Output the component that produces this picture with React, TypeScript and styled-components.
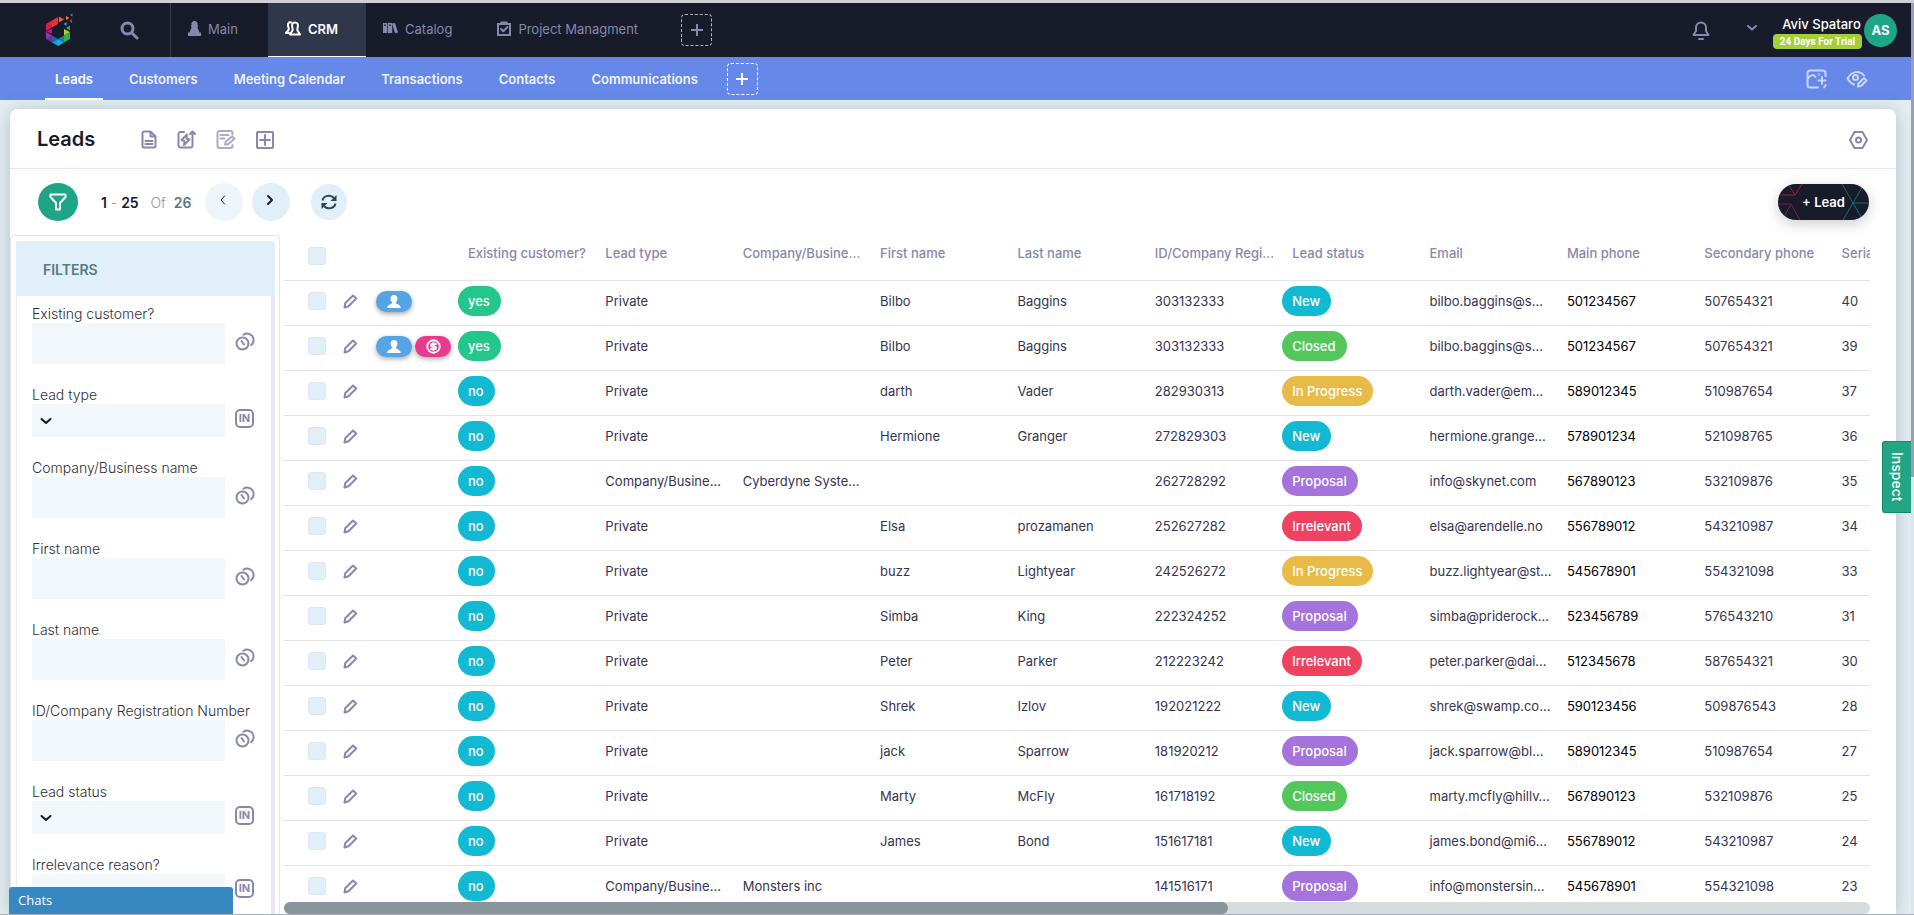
import React from "react";
import styled, { createGlobalStyle } from "styled-components";
import { CircleDollarSign } from "lucide-react";

const Global = createGlobalStyle`
  * { box-sizing: border-box; }
  body { margin: 0; font-family: Inter, "Liberation Sans", sans-serif; font-size: 13px; color: #37344f; }
  button, input, select { font: inherit; margin: 0; }
  button { border: 0; padding: 0; background: none; cursor: pointer; color: inherit; }
  a { color: inherit; text-decoration: none; }
  svg { display: block; flex: none; }
`;

const Page = styled.div`
  height: 100vh;
  display: flex;
  flex-direction: column;
  overflow: hidden;
  border-top: 3px solid #cfd0d6;
  border-bottom: 1px solid #aab0b8;
  background: #e4eff2;
`;
const Frame = styled.div`
  flex: 1;
  min-height: 0;
  display: flex;
`;
const Main = styled.div`
  flex: 1;
  min-width: 0;
  display: flex;
  flex-direction: column;
`;
const PageScroll = styled.div`
  width: 3px;
  background: #dbe6ec;
  &::before { content: ""; display: block; height: 52%; background: #9d9bbb; }
`;

const TopBar = styled.header`
  height: 54px;
  flex: none;
  display: flex;
  align-items: center;
  background: #171b2a;
  color: #8987ad;
  padding-right: 14px;
`;
const Brand = styled.div`
  width: 171px;
  height: 100%;
  display: flex;
  align-items: center;
  gap: 47px;
  padding-left: 45px;
  border-right: 1px solid #343848;
`;
const Tabs = styled.nav`
  display: flex;
  align-self: stretch;
  align-items: center;
`;
const Tab = styled.a<{ $active?: boolean }>`
  display: flex;
  align-items: center;
  gap: 7px;
  height: 100%;
  min-width: 97px;
  padding: 0 28px 2px 17px;
  white-space: nowrap;
  color: ${(p) => (p.$active ? "#fff" : "#8987ad")};
  font-weight: ${(p) => (p.$active ? 600 : 400)};
  background: ${(p) => (p.$active ? "#30374b" : "transparent")};
  border-bottom: 1px solid ${(p) => (p.$active ? "#fff" : "transparent")};
`;
const AddTab = styled.button<{ $light?: boolean }>`
  width: 31px;
  height: 32px;
  display: grid;
  place-items: center;
  margin-left: ${(p) => (p.$light ? 19 : 15)}px;
  border: 1px dashed ${(p) => (p.$light ? "#fff" : "#b4b4b4")};
  border-radius: 4px;
  color: ${(p) => (p.$light ? "#fff" : "#8987ad")};
`;
const Spacer = styled.div`flex: 1;`;
const User = styled.div`
  display: flex;
  align-items: center;
  gap: 2px;
  margin-left: 16px;
`;
const UserText = styled.div`
  display: flex;
  flex-direction: column;
  align-items: center;
  gap: 1px;
  padding-top: 4px;
`;
const UserName = styled.div`
  color: #fff;
  font-weight: 500;
  line-height: 18px;
  padding-left: 8px;
`;
const Trial = styled.div`
  height: 15px;
  width: 89px;
  text-align: center;
  border-radius: 4px;
  background: #a6ce39;
  color: #fff;
  font-family: Roboto, "Liberation Sans", sans-serif;
  font-size: 10px;
  font-weight: 700;
  line-height: 15px;
  white-space: nowrap;
`;
const Avatar = styled.button`
  width: 33px;
  height: 33px;
  border-radius: 50%;
  background: #1ea585;
  color: #fff;
  font-weight: 700;
`;

const SubBar = styled.nav`
  height: 43px;
  flex: none;
  display: flex;
  align-items: center;
  padding: 0 43px 0 45px;
  background: #6689e9;
  color: #c9d5f9;
`;
const SubLinks = styled.div`
  display: flex;
  align-self: stretch;
  gap: 16px;
`;
const SubLink = styled.a<{ $active?: boolean }>`
  display: flex;
  align-items: center;
  padding: 2px 10px 0;
  color: ${(p) => (p.$active ? "#fff" : "#eef2fd")};
  font-weight: 600;
  white-space: nowrap;
  border-bottom: 2px solid ${(p) => (p.$active ? "#fff" : "transparent")};
`;
const Tools = styled.div<{ $gap: number }>`
  display: flex;
  align-items: center;
  gap: ${(p) => p.$gap}px;
`;

const Card = styled.section`
  flex: 1;
  min-height: 0;
  display: flex;
  flex-direction: column;
  margin: 9px 15px 0 10px;
  background: #fff;
  border-radius: 8px 8px 0 0;
  box-shadow: 0 2px 18px rgba(90, 110, 125, 0.38);
`;
const TitleRow = styled.div`
  display: flex;
  align-items: center;
  height: 60px;
  flex: none;
  padding: 2px 28px 0 27px;
  border-bottom: 1px solid #e7e6f4;
  color: #8987ad;
`;
const Title = styled.h1`
  margin: 0 46px 2px 0;
  font-size: 20px;
  font-weight: 600;
  color: #171b2a;
`;
const ActionRow = styled.div`
  display: flex;
  align-items: center;
  height: 66px;
  flex: none;
  padding: 0 27px 0 28px;
`;
const Round = styled.button<{ $bg: string; $w: number }>`
  width: ${(p) => p.$w}px;
  height: ${(p) => Math.min(p.$w, 38)}px;
  border-radius: 50%;
  display: grid;
  place-items: center;
  background: ${(p) => p.$bg};
`;
const PageButton = styled(Round)`
  padding: 0 2px 4px 0;
  color: #171b2a;
`;
const RefreshButton = styled(Round)`
  margin-left: 21px;
  color: #2f4750;
`;
const Range = styled.div`
  display: flex;
  width: 127px;
  padding-left: 23px;
  font-size: 14px;
  font-weight: 600;
  color: #171b2a;
  white-space: pre;
`;
const Soft = styled.span<{ $bold?: boolean }>`
  color: ${(p) => (p.$bold ? "#587a80" : "#8a97a3")};
  font-weight: ${(p) => (p.$bold ? 600 : 300)};
`;
const LeadButton = styled.button`
  position: relative;
  width: 91px;
  height: 36px;
  overflow: hidden;
  border-radius: 18px;
  background: #171b2a;
  color: #fff;
  font-weight: 600;
  box-shadow: 0 4px 14px rgba(30, 30, 40, 0.22);
  & svg { position: absolute; inset: 0; }
  & span { position: relative; }
`;

const Body = styled.div`
  flex: 1;
  min-height: 0;
  display: flex;
  padding-right: 26px;
`;
const Filters = styled.aside`
  width: 270px;
  flex: none;
  display: flex;
  flex-direction: column;
  margin-right: 4px;
  padding: 5px 4px 0 5px;
  border: 1px solid #e4e3ee;
  border-bottom: 0;
  border-radius: 4px 4px 0 0;
`;
const FiltersHead = styled.h2`
  margin: 0;
  height: 55px;
  flex: none;
  padding: 0 27px;
  line-height: 57px;
  border-radius: 3px 3px 0 0;
  background: #e1eff8;
  color: #587a80;
  font-size: 14px;
  font-weight: 600;
`;
const FilterList = styled.div`
  flex: 1;
  min-height: 0;
  overflow: hidden;
  padding: 9px 0 0 15px;
  border-left: 1px solid #ecebf5;
  border-right: 4px solid #e8e7f3;
`;
const Field = styled.div`margin-bottom: 22px;`;
const Label = styled.label`
  display: block;
  line-height: 18px;
  font-size: 14px;
  font-weight: 300;
  color: #2f2f38;
  white-space: nowrap;
`;
const FieldRow = styled.div`
  display: flex;
  align-items: center;
  gap: 10px;
  color: #8987ad;
  & > button { margin-bottom: 4px; }
`;
const TextBox = styled.input`
  width: 193px;
  height: 41px;
  border: 0;
  background: #f2f7fb;
`;
const SelectWrap = styled.div`
  position: relative;
  & svg { position: absolute; left: 8px; top: 13px; color: #171b2a; pointer-events: none; }
`;
const SelectBox = styled.select`
  display: block;
  width: 193px;
  height: 33px;
  appearance: none;
  border: 0;
  border-radius: 0;
  background: #f2f7fb;
`;
const InButton = styled.button`
  width: 19px;
  height: 19px;
  border: 2px solid #8987ad;
  border-radius: 5px;
  font-size: 11px;
  line-height: 15px;
  font-weight: 700;
`;

const Grid = styled.div`
  flex: 1;
  min-width: 0;
  display: flex;
  flex-direction: column;
`;
const Scroller = styled.div`
  flex: 1;
  min-height: 0;
  overflow: hidden;
`;
const ScrollTrack = styled.div`
  height: 12px;
  flex: none;
  border-radius: 6px;
  background: #d6dcdd;
  &::before { content: ""; display: block; width: 59.5%; height: 12px; border-radius: 6px; background: #88959a; }
`;
const Table = styled.table`
  width: 1685px;
  table-layout: fixed;
  border-collapse: separate;
  border-spacing: 0;
`;
const Col = styled.col<{ $w?: number }>`width: ${(p) => (p.$w ? p.$w + "px" : "auto")};`;
const Th = styled.th`
  height: 46px;
  padding: 0 0 9px 10px;
  text-align: left;
  font-weight: 500;
  color: #8987ad;
  white-space: nowrap;
  overflow: hidden;
  text-overflow: ellipsis;
  border-bottom: 1px solid #e3e3ec;
`;
const Td = styled.td<{ $flush?: boolean; $dark?: boolean }>`
  height: 45px;
  padding: 0 0 4px ${(p) => (p.$flush ? 0 : 10)}px;
  white-space: nowrap;
  overflow: hidden;
  text-overflow: ellipsis;
  color: ${(p) => (p.$dark ? "#000" : "#37344f")};
  border-bottom: 1px solid #e3e3ec;
`;
const CheckTh = styled(Th)`padding: 0 0 4px 24px;`;
const CheckTd = styled(Td)`padding: 0 0 4px 24px;`;
const BadgeTd = styled(Td)`padding: 0 0 4px; overflow: visible;`;
const Check = styled.input`
  display: block;
  appearance: none;
  width: 18px;
  height: 18px;
  border: 1px solid #e4e4f3;
  border-radius: 3px;
  background: #e1eff9;
`;
const EditButton = styled.button`display: block; color: #8987ad;`;
const Pill = styled.span<{ $bg: string }>`
  display: block;
  width: fit-content;
  height: 30px;
  padding: 0 11px 0 10px;
  border-radius: 15px;
  line-height: 30px;
  color: #fff;
  font-weight: 500;
  background: ${(p) => p.$bg};
`;
const Badges = styled.div`display: flex; gap: 3px;`;
const Badge = styled.button<{ $bg: string }>`
  width: 36px;
  height: 21px;
  flex: none;
  border-radius: 11px;
  display: grid;
  place-items: center;
  color: #fff;
  background: ${(p) => p.$bg};
  box-shadow: 0 2px 5px rgba(0, 0, 0, 0.35);
`;

const Chats = styled.button`
  position: fixed;
  left: 9px;
  bottom: 1px;
  width: 224px;
  height: 27px;
  padding: 0 9px 2px;
  text-align: left;
  border-radius: 3px 3px 0 0;
  background: #3787c0;
  color: #fff;
  font-family: "Open Sans", sans-serif;
`;
const Inspect = styled.button`
  position: fixed;
  right: 3px;
  top: 441px;
  width: 29px;
  height: 72px;
  writing-mode: vertical-rl;
  border: 1px solid #0e8c6a;
  border-right: 0;
  border-radius: 3px 0 0 3px;
  background: #22a585;
  color: #fff;
  font-size: 14px;
  font-weight: 500;
`;

type IconProps = { w: number; h?: number; box?: string; sw?: number; children: React.ReactNode };
const Icon = ({ w, h = w, box = `0 0 ${w} ${h}`, sw = 2, children }: IconProps) => (
  <svg width={w} height={h} viewBox={box} fill="none" stroke="currentColor" strokeWidth={sw} strokeLinecap="round" strokeLinejoin="round" aria-hidden="true">
    {children}
  </svg>
);

const Logo = () => (
  <svg width="28" height="34" viewBox="0 0 28 34" aria-label="Logo">
    <path d="M1 11 7 7.500V14.500z" fill="#d92a3a" />
    <path d="M7 7.500 13 4V11L7 14.500z" fill="#ee2f3a" />
    <path d="M1 11V18L7 14.500z" fill="#e0185f" />
    <path d="M14 3.500 19 6.500 14 9.500z" fill="#f0632b" />
    <path d="M1 18.500 7 16V20.500z" fill="#c2187b" />
    <path d="M1 19 7 22.500V29.500L1 26z" fill="#6d2f94" />
    <path d="M1 19V26L7 22.500z" fill="#8c3aa0" />
    <path d="M7 22.500V29.500L13 26z" fill="#2a5fb0" />
    <path d="M7 29.500 13 26V33z" fill="#1b9bdc" />
    <path d="M13 26V33L19 29.500z" fill="#12b3e0" />
    <path d="M13 26 19 22.500V29.500z" fill="#16898f" />
    <path d="M19 22.500 25 19V26L19 29.500z" fill="#2bb24c" />
    <path d="M19 16V22.500L25 19z" fill="#a9cf3a" />
    <path d="M21 15 25 12.500V17.500z" fill="#47a845" />
    <path d="M21 3 24.500 5 21 7z" fill="#f58025" />
    <path d="M24 8 27 6V10z" fill="#e5197b" />
    <path d="M25 2 27.500.5V3.500z" fill="#1b9bdc" />
    <path d="M18.500 11 21.500 9V13z" fill="#16b3d8" />
  </svg>
);
const SearchIcon = () => (
  <Icon w={19} sw={3}><circle cx="7.500" cy="7.500" r="5.500" /><path d="M12 12l5 5" /></Icon>
);
const PawnIcon = () => (
  <svg width="13" height="15" viewBox="0 0 13 15" fill="currentColor" aria-hidden="true">
    <path d="M6.500 0a3 3 0 0 1 2.800 4.200H10v1.500H9.200L11.500 11.500H13V15H0v-3.500h1.500L3.800 5.700H3V4.200h.7A3 3 0 0 1 6.500 0z" />
  </svg>
);
const PeopleIcon = () => (
  <Icon w={16} h={15} sw={2}>
    <path d="M6 1.500C3.500.5 2.500 3 3.200 5.500c.5 1.500 1 2.500.3 3.500L1 12h3" />
    <path d="M10 1.500c-2.500 0-3.300 2-2.800 4.500.3 1.500 1 2.500.3 3.500L5 13.500h10L12.500 9.500c-.7-1 0-2 .3-3.500C13.300 3.500 12.500 1.500 10 1.500z" />
  </Icon>
);
const BooksIcon = () => (
  <svg width="15" height="14" viewBox="0 0 15 14" fill="currentColor" fillRule="evenodd" aria-hidden="true">
    <path d="M0 1h4.300v10H0zM1.300 2.500v1.500h1.500V2.500z" />
    <path d="M4.900 1h4.300v10H4.900zM6.300 2.500v1.500h1.500V2.500z" />
    <path d="M9 1.500L12 1l3 9.500-3 .8z" />
  </svg>
);
const ClipboardIcon = () => (
  <Icon w={14} h={15} sw={2}>
    <path d="M1 3h12v11H1z M4.500 2.500V1.500h5v1" strokeLinejoin="miter" />
    <path d="M4 8l2.300 2.300L10.500 6" />
  </Icon>
);
const PlusIcon = () => (
  <Icon w={12} sw={2}><path d="M6 0v12M0 6h12" strokeLinecap="butt" /></Icon>
);
const BellIcon = () => (
  <Icon w={18} h={19} sw={2}>
    <path d="M9 1.500a5 5 0 0 0-5 5V10L1.500 14h15L14 10V6.500a5 5 0 0 0-5-5zM7 18h4" />
  </Icon>
);
const ImageAddIcon = () => (
  <Icon w={21} h={20} sw={2}>
    <path d="M12 18.500H4a2.500 2.500 0 0 1-2.500-2.500V4A2.500 2.500 0 0 1 4 1.500h13A2.500 2.500 0 0 1 19.500 4v3M2 9.500C5 5 7.500 5.500 9.500 8M12.500 11.500h7M16 8v7M19.500 16v.5l-1.500 2" />
    <circle cx="13" cy="5.500" r=".3" />
  </Icon>
);
const EyeEditIcon = () => (
  <Icon w={22} h={18} sw={2}>
    <path d="M8 14.500C5 13.500 3 11 1.500 8.500 6 .5 14 .5 18 5.500" />
    <circle cx="9.500" cy="7.500" r="2.500" />
    <path d="M12 16.500l.5-3 5.500-5.500 2.500 2.500-5.500 5.500z" />
  </Icon>
);
const DocIcon = () => (
  <Icon w={16} h={19} sw={2}>
    <path d="M9.500 1.500H3A1.500 1.500 0 0 0 1.500 3v13A1.500 1.500 0 0 0 3 17.500h10A1.500 1.500 0 0 0 14.500 16V6.500zM9.500 1.500v5h5M4.500 11h7M4.500 14h7" />
  </Icon>
);
const BoltIcon = () => (
  <Icon w={19} sw={2}>
    <path d="M7 2H3.500A2 2 0 0 0 1.500 4v11.500a2 2 0 0 0 2 2h10a2 2 0 0 0 2-2V2M13 4l2.500-2.500L18 4" />
    <path d="M10 4.500L4.500 10l3 1L7 15l5.500-5.500-3-1z" />
  </Icon>
);
const NoteEditIcon = () => (
  <Icon w={20} h={19} sw={2}>
    <g opacity=".7">
      <path d="M16.500 4.500V3a2 2 0 0 0-2-2H3.500a2 2 0 0 0-2 2v13a2 2 0 0 0 2 2h11a2 2 0 0 0 2-2V15M4.500 5h8M4.500 8.500h4" />
      <path d="M9 14.500l.7-2.700L16 6.500l2.500 2.200-6.500 5.500z" />
    </g>
  </Icon>
);
const PlusBoxIcon = () => (
  <Icon w={18} sw={2}><path d="M2 1h14a1 1 0 0 1 1 1v14a1 1 0 0 1-1 1H2a1 1 0 0 1-1-1V2a1 1 0 0 1 1-1zM9 4v10M4 9h10" /></Icon>
);
const HexIcon = () => (
  <Icon w={19} h={18} sw={2}>
    <path d="M5.500 1h8L18 9l-4.500 8h-8L1 9z" /><circle cx="9.500" cy="9" r="2.500" />
  </Icon>
);
const FunnelIcon = () => (
  <Icon w={18} sw={2}><path d="M1.500 1.500h15V4L11 10v6.500H7V10L1.500 4z" stroke="#fff" /></Icon>
);
const RefreshIcon = () => (
  <Icon w={16} sw={2}>
    <path d="M1.500 6.500C2.500 1.500 9.500 0 13 4M14.500 9.500C13.500 14.500 6.500 16 3 12" strokeLinecap="butt" />
    <path d="M15.500 1v6H9.500zM.5 15V9h6z" fill="currentColor" stroke="none" />
  </Icon>
);
const RingsIcon = () => (
  <Icon w={21} h={19} sw={2}>
    <circle cx="7.500" cy="11.500" r="6" />
    <path d="M8.500 2.800A6 6 0 1 1 16 13.200M6.500 9l2.500 3.500" />
  </Icon>
);
const PencilIcon = () => (
  <Icon w={15} sw={2}><path d="M1.500 13.500l.7-4.200L10 1.500l3.200 3L5.500 12.300z" /></Icon>
);
const PersonIcon = () => (
  <svg width="14" height="13" viewBox="0 0 14 13" fill="currentColor" aria-hidden="true">
    <path d="M7 0c2.300 0 3.600 1.300 3.400 3.800C10.200 6 9.300 7 8.700 7.600c0 1.600 4.500 2 5.300 5.400H0c.8-3.400 5.300-3.800 5.300-5.400C4.700 7 3.800 6 3.600 3.800 3.400 1.300 4.700 0 7 0z" />
  </svg>
);
const LeadLines = () => (
  <svg width="91" height="36" viewBox="0 0 91 36" fill="none" strokeWidth="1" aria-hidden="true">
    <path d="M0 11h17L10 0M17 11L24 0" stroke="#9c2137" />
    <path d="M0 20h13L6 33M13 20l9 16" stroke="#7a1f57" />
    <path d="M75 19L64 0M75 19L86 0M75 19h16" stroke="#1b6b66" />
    <path d="M75 19L65 36M75 19L85 36" stroke="#18707f" />
  </svg>
);

const status: Record<string, string> = {
  New: "#12b9d3", Closed: "#53c75c", "In Progress": "#e8bb49", Proposal: "#a474dc", Irrelevant: "#ef4261",
};
const headings = ["Existing customer?", "Lead type", "Company/Busine…", "First name", "Last name", "ID/Company Regi…", "Lead status", "Email", "Main phone", "Secondary phone", "Serial"];
const P = "Private";
const C = "Company/Busine…";
const rows: string[][] = [
  [P, "", "Bilbo", "Baggins", "303132333", "New", "bilbo.baggins@s…", "501234567", "507654321", "40"],
  [P, "", "Bilbo", "Baggins", "303132333", "Closed", "bilbo.baggins@s…", "501234567", "507654321", "39"],
  [P, "", "darth", "Vader", "282930313", "In Progress", "darth.vader@em…", "589012345", "510987654", "37"],
  [P, "", "Hermione", "Granger", "272829303", "New", "hermione.grange…", "578901234", "521098765", "36"],
  [C, "Cyberdyne Syste…", "", "", "262728292", "Proposal", "info@skynet.com", "567890123", "532109876", "35"],
  [P, "", "Elsa", "prozamanen", "252627282", "Irrelevant", "elsa@arendelle.no", "556789012", "543210987", "34"],
  [P, "", "buzz", "Lightyear", "242526272", "In Progress", "buzz.lightyear@st…", "545678901", "554321098", "33"],
  [P, "", "Simba", "King", "222324252", "Proposal", "simba@priderock…", "523456789", "576543210", "31"],
  [P, "", "Peter", "Parker", "212223242", "Irrelevant", "peter.parker@dai…", "512345678", "587654321", "30"],
  [P, "", "Shrek", "Izlov", "192021222", "New", "shrek@swamp.co…", "590123456", "509876543", "28"],
  [P, "", "jack", "Sparrow", "181920212", "Proposal", "jack.sparrow@bl…", "589012345", "510987654", "27"],
  [P, "", "Marty", "McFly", "161718192", "Closed", "marty.mcfly@hillv…", "567890123", "532109876", "25"],
  [P, "", "James", "Bond", "151617181", "New", "james.bond@mi6…", "556789012", "543210987", "24"],
  [C, "Monsters inc", "", "", "141516171", "Proposal", "info@monstersin…", "545678901", "554321098", "23"],
];
const filters: [string, boolean][] = [
  ["Existing customer?", false], ["Lead type", true], ["Company/Business name", false], ["First name", false],
  ["Last name", false], ["ID/Company Registration Number", false], ["Lead status", true], ["Irrelevance reason?", true],
];

export default function App() {
  return (
    <Page>
      <Global />
      <Frame>
        <Main>
          <TopBar>
            <Brand>
              <Logo />
              <button aria-label="Search"><SearchIcon /></button>
            </Brand>
            <Tabs>
              <Tab href="#"><PawnIcon />Main</Tab>
              <Tab href="#" $active><PeopleIcon />CRM</Tab>
              <Tab href="#"><BooksIcon />Catalog</Tab>
              <Tab href="#"><ClipboardIcon />Project Managment</Tab>
              <AddTab aria-label="Add module"><PlusIcon /></AddTab>
            </Tabs>
            <Spacer />
            <Tools $gap={37}>
              <button aria-label="Notifications"><BellIcon /></button>
              <button aria-label="Account menu"><Icon w={10} h={10}><path d="M1 1l4 3.500L9 1" /></Icon></button>
            </Tools>
            <User>
              <UserText>
                <UserName>Aviv Spataro</UserName>
                <Trial>24 Days For Trial</Trial>
              </UserText>
              <Avatar>AS</Avatar>
            </User>
          </TopBar>
          <SubBar>
            <SubLinks>
              {["Leads", "Customers", "Meeting Calendar", "Transactions", "Contacts", "Communications"].map((t, i) => (
                <SubLink href="#" key={t} $active={i === 0}>{t}</SubLink>
              ))}
            </SubLinks>
            <AddTab $light aria-label="Add tab"><PlusIcon /></AddTab>
            <Spacer />
            <Tools $gap={19}>
              <button aria-label="Add image"><ImageAddIcon /></button>
              <button aria-label="Edit view"><EyeEditIcon /></button>
            </Tools>
          </SubBar>
          <Card>
            <TitleRow>
              <Title>Leads</Title>
              <Tools $gap={20}>
                <button aria-label="Document"><DocIcon /></button>
                <button aria-label="Automation"><BoltIcon /></button>
                <button aria-label="Edit form"><NoteEditIcon /></button>
                <button aria-label="Add"><PlusBoxIcon /></button>
              </Tools>
              <Spacer />
              <button aria-label="Settings"><HexIcon /></button>
            </TitleRow>
            <ActionRow>
              <Round $bg="#1ea585" $w={40} aria-label="Filter"><FunnelIcon /></Round>
              <Range>1<Soft> - </Soft>25<Soft>   Of  </Soft><Soft $bold>26</Soft></Range>
              <Tools $gap={9}>
                <PageButton $bg="#edf4fa" $w={38} aria-label="Previous page"><Icon w={8} h={12} sw={1}><path d="M5.500 2L2 6l3.500 4" /></Icon></PageButton>
                <PageButton $bg="#e1eff8" $w={38} aria-label="Next page"><Icon w={8} h={12} sw={2}><path d="M2 2l4 4-4 4" /></Icon></PageButton>
              </Tools>
              <RefreshButton $bg="#e1eff8" $w={36} aria-label="Refresh"><RefreshIcon /></RefreshButton>
              <Spacer />
              <LeadButton><LeadLines /><span>+ Lead</span></LeadButton>
            </ActionRow>
            <Body>
              <Filters>
                <FiltersHead>FILTERS</FiltersHead>
                <FilterList>
                  {filters.map(([name, isSelect], i) => (
                    <Field key={name}>
                      <Label htmlFor={`f${i}`}>{name}</Label>
                      <FieldRow>
                        {isSelect ? (
                          <>
                            <SelectWrap>
                              <SelectBox id={`f${i}`}><option></option></SelectBox>
                              <Icon w={12} h={8}><path d="M1.500 2l4.500 4 4.500-4" /></Icon>
                            </SelectWrap>
                            <InButton>IN</InButton>
                          </>
                        ) : (
                          <>
                            <TextBox id={`f${i}`} type="text" />
                            <button aria-label="Match mode"><RingsIcon /></button>
                          </>
                        )}
                      </FieldRow>
                    </Field>
                  ))}
                </FilterList>
              </Filters>
              <Grid>
                <Scroller>
                  <Table>
                    <colgroup>
                      <Col $w={59} /><Col $w={33} /><Col $w={82} />
                      {headings.map((h) => <Col key={h} />)}
                    </colgroup>
                    <thead>
                      <tr>
                        <CheckTh><Check type="checkbox" aria-label="Select all" /></CheckTh>
                        <Th /><Th />
                        {headings.map((h) => <Th key={h}>{h}</Th>)}
                      </tr>
                    </thead>
                    <tbody>
                      {rows.map((r, i) => (
                        <tr key={i}>
                          <CheckTd><Check type="checkbox" aria-label={`Select row ${i + 1}`} /></CheckTd>
                          <Td $flush><EditButton aria-label="Edit row"><PencilIcon /></EditButton></Td>
                          <BadgeTd>
                            {i < 2 && (
                              <Badges>
                                <Badge $bg="#55a5e6" aria-label="Customer"><PersonIcon /></Badge>
                                {i === 1 && <Badge $bg="#e93a8f" aria-label="Deal"><CircleDollarSign size={15} strokeWidth={3} /></Badge>}
                              </Badges>
                            )}
                          </BadgeTd>
                          <Td $flush><Pill $bg={i < 2 ? "#23c78b" : "#12b9d3"}>{i < 2 ? "yes" : "no"}</Pill></Td>
                          {r.map((v, c) => c === 5
                            ? <Td key={c} $flush><Pill $bg={status[v]}>{v}</Pill></Td>
                            : <Td key={c} $dark={c === 7}>{v}</Td>)}
                        </tr>
                      ))}
                    </tbody>
                  </Table>
                </Scroller>
                <ScrollTrack />
              </Grid>
            </Body>
          </Card>
        </Main>
        <PageScroll />
      </Frame>
      <Inspect>Inspect</Inspect>
      <Chats>Chats</Chats>
    </Page>
  );
}
